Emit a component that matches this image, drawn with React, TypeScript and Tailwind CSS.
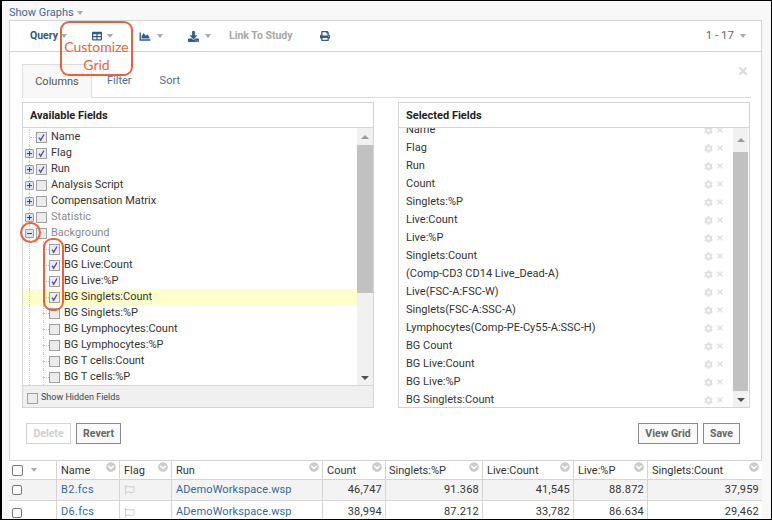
import React from "react";
import { FaTable, FaChartArea, FaDownload, FaPrint, FaCog, FaTimes, FaRegFlag, FaChevronCircleDown } from "react-icons/fa";

const Caret = () => <span className="inline-block w-0 h-0 border-l-[3px] border-r-[3px] border-t-[4px] border-l-transparent border-r-transparent border-t-[#aaaaaa]" />;

const Check = ({ on }: { on?: boolean }) => (
  <span className="flex items-center justify-center w-[11px] h-[11px] border border-[#a0a0a0] bg-[#ececec] shrink-0">
    {on && (
      <svg viewBox="0 0 9 9" className="w-[9px] h-[9px]">
        <path d="M2 4.6 L3.7 7.2 L7 1.5" fill="none" stroke="#3f55a5" strokeWidth="1.3" />
      </svg>
    )}
  </span>
);

const Expander = ({ open }: { open?: boolean }) => (
  <span className="relative flex items-center justify-center w-[9px] h-[9px] border border-[#8ea0b8] bg-[#dbe3ee] rounded-[1px] shrink-0">
    <span className="block w-[5px] h-px bg-[#33486a]" />
    {!open && <span className="absolute left-[3px] top-[1px] w-px h-[5px] bg-[#33486a]" />}
  </span>
);

type T = { label: string; on?: boolean; exp?: boolean; open?: boolean; muted?: boolean; child?: boolean; hl?: boolean };
const tree: T[] = [
  { label: "Name", on: true },
  { label: "Flag", on: true, exp: true },
  { label: "Run", on: true, exp: true },
  { label: "Analysis Script", exp: true },
  { label: "Compensation Matrix", exp: true },
  { label: "Statistic", exp: true, muted: true },
  { label: "Background", exp: true, open: true, muted: true },
  { label: "BG Count", on: true, child: true },
  { label: "BG Live:Count", on: true, child: true },
  { label: "BG Live:%P", on: true, child: true },
  { label: "BG Singlets:Count", on: true, child: true, hl: true },
  { label: "BG Singlets:%P", child: true },
  { label: "BG Lymphocytes:Count", child: true },
  { label: "BG Lymphocytes:%P", child: true },
  { label: "BG T cells:Count", child: true },
  { label: "BG T cells:%P", child: true },
];

const selected = ["Flag", "Run", "Count", "Singlets:%P", "Live:Count", "Live:%P", "Singlets:Count", "(Comp-CD3 CD14 Live_Dead-A)", "Live(FSC-A:FSC-W)", "Singlets(FSC-A:SSC-A)", "Lymphocytes(Comp-PE-Cy55-A:SSC-H)", "BG Count", "BG Live:Count", "BG Live:%P", "BG Singlets:Count"];

const TreeRow = ({ r }: { r: T }) => (
  <div className={`relative flex items-center h-4 ${r.hl ? "bg-[#ffffcc]" : ""} ${r.child ? "pl-[15px]" : "pl-[2px]"}`}>
    <span className="absolute inset-y-0 left-[6px] border-l border-dotted border-[#cccccc]" />
    {r.child && <span className="absolute inset-y-0 left-[20px] border-l border-dotted border-[#cccccc]" />}
    <span className="w-[11px] flex shrink-0">{r.exp ? <Expander open={r.open} /> : <span className="block w-[6px] ml-[5px] border-t border-dotted border-[#bbbbbb]" />}</span>
    <Check on={r.on} />
    <span className={`ml-[4px] ${r.muted ? "text-[#8a8a8a]" : "text-[#333333]"}`}>{r.label}</span>
  </div>
);

const Scroll = ({ thumbH, topH, w = "w-4" }: { thumbH: string; topH: string; w?: string }) => (
  <div className={`${w} bg-[#f1f1f1] flex flex-col items-center shrink-0 self-stretch`}>
    <div className={`${topH} flex items-center justify-center w-full`}>
      <span className="w-0 h-0 border-l-[4px] border-r-[4px] border-b-[4px] border-l-transparent border-r-transparent border-b-[#9a9a9a]" />
    </div>
    <div className={`${thumbH} w-full bg-[#c1c1c1]`} />
    <div className="flex-1" />
    <div className="h-[14px] flex items-center justify-center w-full">
      <span className="w-0 h-0 border-l-[4px] border-r-[4px] border-t-[4px] border-l-transparent border-r-transparent border-t-[#505050]" />
    </div>
  </div>
);

const cols = ["Name", "Flag", "Run", "Count", "Singlets:%P", "Live:Count", "Live:%P", "Singlets:Count"];
const rows = [
  ["B2.fcs", "ADemoWorkspace.wsp", "46,747", "91.368", "41,545", "88.872", "37,959"],
  ["D6.fcs", "ADemoWorkspace.wsp", "38,994", "87.212", "33,782", "86.634", "29,462"],
];
const grid = "grid grid-cols-[48px_63px_52px_151px_63px_97px_91px_74px_114px]";

const Btn = ({ children, off, w }: { children: React.ReactNode; off?: boolean; w: string }) => (
  <span className={`flex items-center justify-center h-[21px] ${w} border font-bold text-[10.5px] ${off ? "border-[#d4d4d4] text-[#d0d0d0] bg-white" : "border-[#8a8a8a] text-[#666666] bg-[#fafafa]"}`}>{children}</span>
);

const Tools = () => (
  <span className="flex items-center gap-[3px] text-[#e0e0e0]"><FaCog className="w-[9px] h-[9px]" /><FaTimes className="w-[8px] h-[8px]" /></span>
);

export default function App() {
  return (
    <div className="relative w-[772px] h-[520px] overflow-hidden bg-[#f8f8f8] border-t border-r border-b border-l-2 border-[#000000] text-[11px] text-[#333333] [font-family:Roboto,sans-serif]">
      <div className="h-[19px] pl-[7px] pt-[5px] flex items-center gap-[3px] text-[#3b6a9c] text-[11px]">
        <span>Show Graphs</span><Caret />
      </div>
      <div className="ml-[7px] w-[753px] h-[499px] border-l border-r border-t border-[#d4d4d4] bg-white flex flex-col">
        <div className="h-[31px] shrink-0 border-b border-[#d4d4d4] flex items-center pl-5 pr-[15px] text-[#9a9a9a]">
          <span className="font-bold text-[#34557f] text-[10.5px] mr-[3px]">Query</span><Caret />
          <span className="w-[25px]" />
          <FaTable className="text-[#2f5d8e] w-[10px] h-[10px] mr-[5px]" /><Caret />
          <span className="w-[26px]" />
          <FaChartArea className="text-[#2f5d8e] w-[12px] h-[11px] mr-[6px]" /><Caret />
          <span className="w-[25px]" />
          <FaDownload className="text-[#2f5d8e] w-[11px] h-[11px] mr-[6px]" /><Caret />
          <span className="w-[18px]" />
          <span className="font-bold text-[10.5px] text-[#a8a8a8] w-[91px]">Link To Study</span>
          <FaPrint className="text-[#2f5d8e] w-[10px] h-[10px]" />
          <span className="flex-1" />
          <span className="text-[11.5px] text-[#666666] mr-[6px]">1 - 17</span><Caret />
        </div>
        <div className="flex-1 flex flex-col px-3 pt-3 relative">
          <FaTimes className="absolute right-[12px] top-[13px] w-[12px] h-[12px] text-[#dddddd]" />
          <div className="flex h-[34px] shrink-0 border-b border-[#dddddd] w-[729px]">
            <span className="w-[70px] h-[34px] pt-[2px] bg-[#f8f8f8] border-l border-t border-r border-[#dddddd] flex items-center justify-center text-[#555555]">Columns</span>
            <span className="ml-[15px] pt-[2px] flex items-center text-[#4d6b8c]">Filter</span>
            <span className="ml-[28px] pt-[2px] flex items-center text-[#4d6b8c]">Sort</span>
          </div>
          <div className="flex justify-between w-[728px] mt-[4px]">
            <div className="w-[352px] h-[306px] border border-[#d4d4d4] flex flex-col">
              <div className="h-[25px] shrink-0 border-b border-[#d4d4d4] flex items-center pl-[7px] pt-[2px] font-bold text-[#222222]">Available Fields</div>
              <div className="flex flex-1 min-h-0 overflow-hidden">
                <div className="flex-1 overflow-hidden pt-px">{tree.map((r) => <TreeRow key={r.label} r={r} />)}</div>
                <Scroll topH="h-[17px]" thumbH="h-[148px]" />
              </div>
              <div className="h-[22px] shrink-0 border-t border-[#d4d4d4] bg-[#f0f0f0] flex items-center pl-1 pt-[3px] text-[9px] text-[#444444] gap-[3px]">
                <Check /><span>Show Hidden Fields</span>
              </div>
            </div>
            <div className="w-[352px] h-[306px] border border-[#d4d4d4] flex flex-col">
              <div className="h-[25px] shrink-0 border-b border-[#d4d4d4] flex items-center pl-[7px] pt-[2px] font-bold text-[#222222]">Selected Fields</div>
              <div className="flex flex-1 min-h-0 overflow-hidden">
                <div className="flex-1 overflow-hidden pl-[7px] pr-[9px]">
                  <div className="h-[11px] overflow-hidden relative">
                    <div className="absolute left-0 right-0 bottom-0 h-[18px] flex items-center justify-between">
                      <span>Name</span>
                      <Tools />
                    </div>
                  </div>
                  {selected.map((s) => (
                    <div key={s} className="h-[18px] flex items-center justify-between">
                      <span>{s}</span>
                      <Tools />
                    </div>
                  ))}
                </div>
                <Scroll topH="h-[24px]" thumbH="h-[239px]" w="w-[15px] mr-px" />
              </div>
            </div>
          </div>
          <div className="flex items-center w-[728px] mt-[15px] pl-[4px] pr-[10px] gap-[5px]">
            <Btn off w="w-[45px]">Delete</Btn><Btn w="w-[45px]">Revert</Btn>
            <span className="flex-1" />
            <Btn w="w-[60px]">View Grid</Btn><Btn w="w-[37px]">Save</Btn>
          </div>
        </div>
        <div className="h-[59px] shrink-0 -mx-px overflow-hidden">
          <div className={`${grid} h-5 border-t border-b border-[#d4d4d4] bg-white`}>
            <div className="flex items-center gap-[8px] pl-[3px] border-r border-[#d4d4d4]">
              <span className="w-[11px] h-[11px] border border-[#777777] rounded-[2px] bg-white" /><Caret />
            </div>
            {cols.map((c) => (
              <div key={c} className={`relative flex items-center pt-[2px] border-r border-[#d4d4d4] text-[#333333] last:border-r-0 ${c === "Singlets:%P" ? "pl-[3px]" : "pl-[4px]"}`}>
                {c}
                <FaChevronCircleDown className="absolute right-[3px] top-[1px] w-[10px] h-[10px] text-[#cccccc]" />
              </div>
            ))}
          </div>
          {rows.map((r, i) => (
            <div key={r[0]} className={`${grid} border-b border-[#d4d4d4] ${i === 0 ? "h-[21px] bg-[#f3f3f3]" : "h-[24px] bg-white"}`}>
              <div className="flex items-center pl-[3px] border-r border-[#d4d4d4]"><span className="w-[10px] h-[10px] border border-[#777777] rounded-[2px] bg-white" /></div>
              <div className="flex items-center pl-[4px] border-r border-[#d4d4d4] text-[#2f6a9e] tracking-[0.3px]">{r[0]}</div>
              <div className="flex items-center pl-[4px] border-r border-[#d4d4d4] text-[#cfcfcf]"><FaRegFlag className="w-[11px] h-[10px]" /></div>
              <div className="flex items-center pl-[4px] border-r border-[#d4d4d4] text-[#2f6a9e] tracking-[0.1px]">{r[1]}</div>
              {r.slice(2).map((v, j) => (
                <div key={j} className="flex items-center justify-end pr-[3px] border-r border-[#d4d4d4] last:border-r-0 tracking-[0.2px]">{v}</div>
              ))}
            </div>
          ))}
        </div>
      </div>

      <div className="absolute left-[58px] top-[20px] w-[73px] h-[55px] border-2 border-[#e8633a] rounded-[9px] flex flex-col items-center justify-end text-[#e8633a] text-[14px] leading-[18px] [font-family:Lato,sans-serif]">
        <span>Customize</span><span>Grid</span>
      </div>
      <div className="absolute left-[18px] top-[221px] w-[21px] h-[21px] border-2 border-[#e8633a] rounded-full" />
      <div className="absolute left-[41px] top-[237px] w-[21px] h-[73px] border-2 border-[#e8633a] rounded-[9px]" />
    </div>
  );
}
